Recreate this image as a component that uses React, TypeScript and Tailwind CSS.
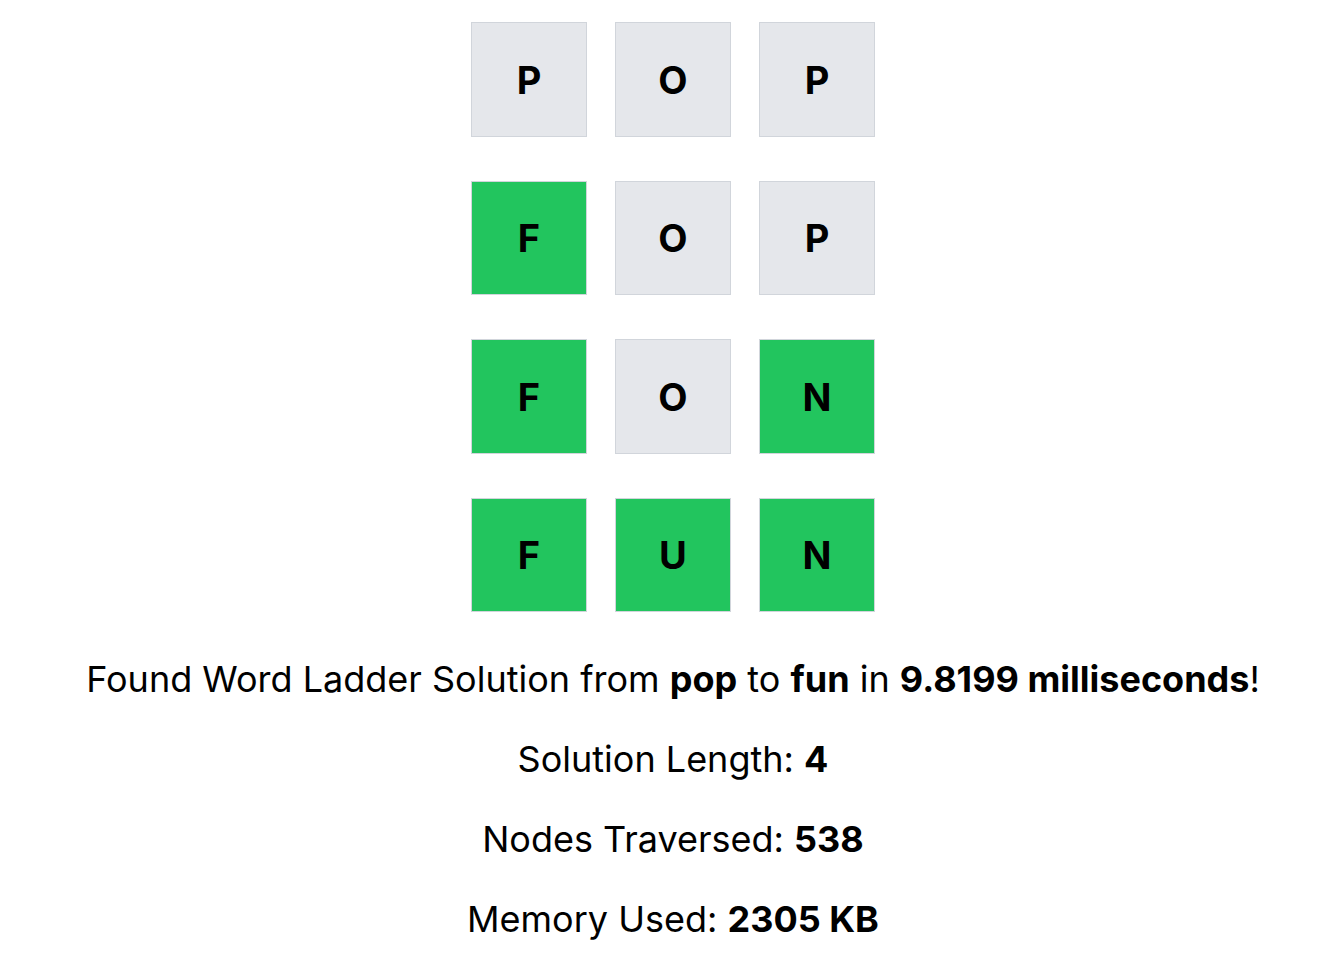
import React from "react";

const rows: { l: string; g: boolean }[][] = [
  [{ l: "P", g: false }, { l: "O", g: false }, { l: "P", g: false }],
  [{ l: "F", g: true }, { l: "O", g: false }, { l: "P", g: false }],
  [{ l: "F", g: true }, { l: "O", g: false }, { l: "N", g: true }],
  [{ l: "F", g: true }, { l: "U", g: true }, { l: "N", g: true }],
];

export default function App() {
  return (
    <div
      className="min-h-screen bg-white text-black pl-[25px]"
      style={{ fontFamily: "Inter, 'Noto Sans', sans-serif" }}
    >
      <div className="flex flex-col items-center pt-[22.3px] gap-[44px]">
        {rows.map((row, i) => (
          <div key={i} className="flex gap-[28.6px]">
            {row.map((t, j) => (
              <div
                key={j}
                className={`w-[115.4px] h-[114.5px] border border-[#d1d5db] flex items-center justify-center text-[38px] font-bold leading-none ${
                  t.g ? "bg-[#22c55e]" : "bg-[#e5e7eb]"
                }`}
              >
                {t.l}
              </div>
            ))}
          </div>
        ))}
      </div>
      <div className="flex flex-col items-center gap-10 mt-[47px] text-4xl">
        <p>
          Found Word Ladder Solution from <b className="font-bold">pop</b> to{" "}
          <b className="font-bold">fun</b> in{" "}
          <b className="font-bold">9.8199 milliseconds</b>!
        </p>
        <p>
          Solution Length: <b className="font-bold">4</b>
        </p>
        <p>
          Nodes Traversed: <b className="font-bold">538</b>
        </p>
        <p>
          Memory Used: <b className="font-bold">2305 KB</b>
        </p>
      </div>
    </div>
  );
}
